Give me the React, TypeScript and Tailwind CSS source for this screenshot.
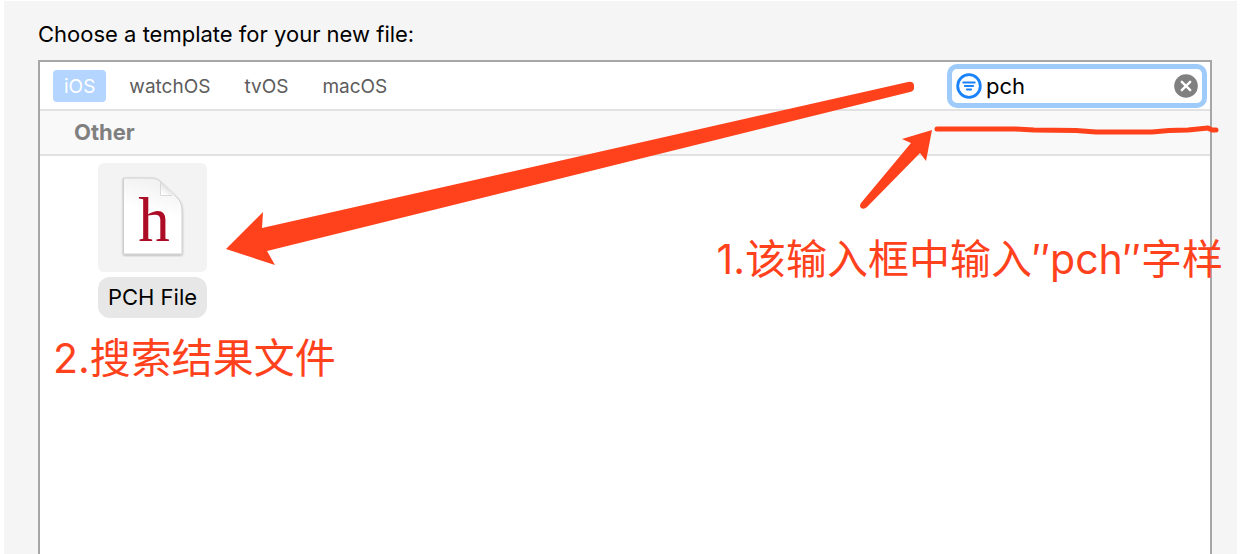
import React, { useState } from "react";

const platforms = ["iOS", "watchOS", "tvOS", "macOS"];

function FilterIcon() {
  return (
    <svg viewBox="0 0 26 26" className="size-[26px] shrink-0" fill="none" stroke="#1a82fb" aria-hidden="true">
      <circle cx="13" cy="13" r="11.3" strokeWidth="2.8" />
      <path d="M7.2 9.5h11.6M8.8 13h8.4M10.8 16.500h4.400" strokeWidth="1.8" strokeLinecap="round" />
    </svg>
  );
}

function ClearIcon() {
  return (
    <svg viewBox="0 0 24 24" className="size-6" aria-hidden="true">
      <circle cx="12" cy="12" r="11.8" fill="#808080" />
      <path d="M7.8 7.8l8.4 8.4M16.2 7.8l-8.4 8.4" stroke="#fff" strokeWidth="2.4" strokeLinecap="round" />
    </svg>
  );
}

function HeaderFileIcon() {
  return (
    <svg viewBox="0 0 64 82" className="h-[82px] w-16" aria-hidden="true">
      <defs>
        <linearGradient id="page" x1="0.6" y1="0" x2="0.4" y2="1">
          <stop offset="0" stopColor="#f0f0f0" />
          <stop offset="0.45" stopColor="#fff" />
        </linearGradient>
        <linearGradient id="fold" x1="0.7" y1="0.3" x2="0.2" y2="0.9">
          <stop offset="0" stopColor="#d8d8d8" />
          <stop offset="1" stopColor="#fff" />
        </linearGradient>
        <filter id="shade" x="-10%" y="-10%" width="120%" height="120%">
          <feDropShadow dx="0" dy="1" stdDeviation="0.8" floodOpacity="0.3" />
        </filter>
      </defs>
      <path
        d="M2.500 3H30C35 3 38 5 42 9L55 21.500C59 25.500 61 29 61 35V79H2.500Z"
        fill="url(#page)"
        stroke="#cfcfcf"
        filter="url(#shade)"
      />
      <path d="M39.500 7V20.500H54Z" fill="url(#fold)" />
      <path d="M39.500 7V20.500H51" fill="none" stroke="#d2d2d2" strokeWidth="0.8" />
      <text
        x="33"
        y="66"
        textAnchor="middle"
        className="fill-[#ad0c26] font-['Liberation_Serif',serif] text-[63px]"
      >
        h
      </text>
    </svg>
  );
}

function Annotations() {
  return (
    <div className="pointer-events-none absolute inset-0 font-[Inter,'Noto_Sans_CJK_SC',sans-serif] text-[41px] leading-[60px] font-normal text-[#ff411c]">
      <svg viewBox="0 0 1240 554" className="absolute top-0 left-0 w-full" aria-hidden="true">
        <g fill="#ff411c">
          <path d="M226 249L263 212L262 228L908 82Q913 81 914 85V88Q914 91 910 92L267 251L275 265Z" />
          <path d="M932 130L902 139L911 143L861 203Q859 206 861 208Q864 210 867 207L920 153L926 161Z" />
        </g>
        <path
          d="M937 129H1015L1034 130L1076 130.500L1096 132H1152L1169 130.500L1188 130L1208 128L1212 130H1216"
          fill="none"
          stroke="#ff411c"
          strokeWidth="5"
          strokeLinecap="round"
          strokeLinejoin="round"
        />
      </svg>
      <p className="absolute top-[229px] right-[17px] whitespace-nowrap">1.该输入框中输入″pch″字样</p>
      <p className="absolute top-[328px] left-[53px] whitespace-nowrap">2.搜索结果文件</p>
    </div>
  );
}

export default function App() {
  const [platform, setPlatform] = useState("iOS");
  const [query, setQuery] = useState("pch");

  return (
    <div className="relative flex min-h-screen flex-col overflow-hidden bg-white pt-px pr-[3px] pl-1 font-[Inter,sans-serif]">
      <main className="flex grow flex-col bg-[#f5f5f5] pr-[25px] pl-[34px]">
        <h1 className="pt-[19px] pb-3 text-[22px] leading-7 text-black">Choose a template for your new file:</h1>
        <section className="flex grow flex-col border-2 border-b-0 border-[#a6a6a6] bg-white">
          <header className="flex h-[49px] items-center justify-between border-b-2 border-[#e2e2e2] pr-2 pl-[13px]">
            <nav className="flex gap-3">
              {platforms.map((name) => (
                <button
                  key={name}
                  type="button"
                  onClick={() => setPlatform(name)}
                  className={
                    name === platform
                      ? "h-8 rounded bg-[#b3d5ff] px-[11px] pt-[3px] text-[19px] text-white"
                      : "h-8 rounded px-[11px] pt-[3px] text-[19px] text-[#5c5c5c]"
                  }
                >
                  {name}
                </button>
              ))}
            </nav>
            <div className="flex h-[34px] w-[250px] items-center gap-1 rounded-[5px] bg-white px-1 ring-5 ring-[#9fcbfa]">
              <FilterIcon />
              <input
                type="text"
                aria-label="Filter"
                value={query}
                onChange={(e) => setQuery(e.target.value)}
                className="min-w-0 grow pt-0.5 text-[22px] text-black outline-none"
              />
              <button type="button" aria-label="Clear" onClick={() => setQuery("")}>
                <ClearIcon />
              </button>
            </div>
          </header>
          <h2 className="h-[45px] border-b-2 border-[#e2e2e2] bg-[#f9f9f9] pl-[34px] text-[22px] leading-[43px] font-bold text-[#808080]">
            Other
          </h2>
          <div className="flex px-[58px] pt-[7px]">
            <button type="button" className="flex flex-col items-center gap-[5px]">
              <span className="flex size-[109px] items-center justify-center rounded-md bg-[#f3f3f3] pb-1">
                <HeaderFileIcon />
              </span>
              <span className="h-[41px] w-full rounded-xl bg-[#e7e7e7] text-[22px] leading-[41px] text-black">
                PCH File
              </span>
            </button>
          </div>
        </section>
      </main>
      <Annotations />
    </div>
  );
}
